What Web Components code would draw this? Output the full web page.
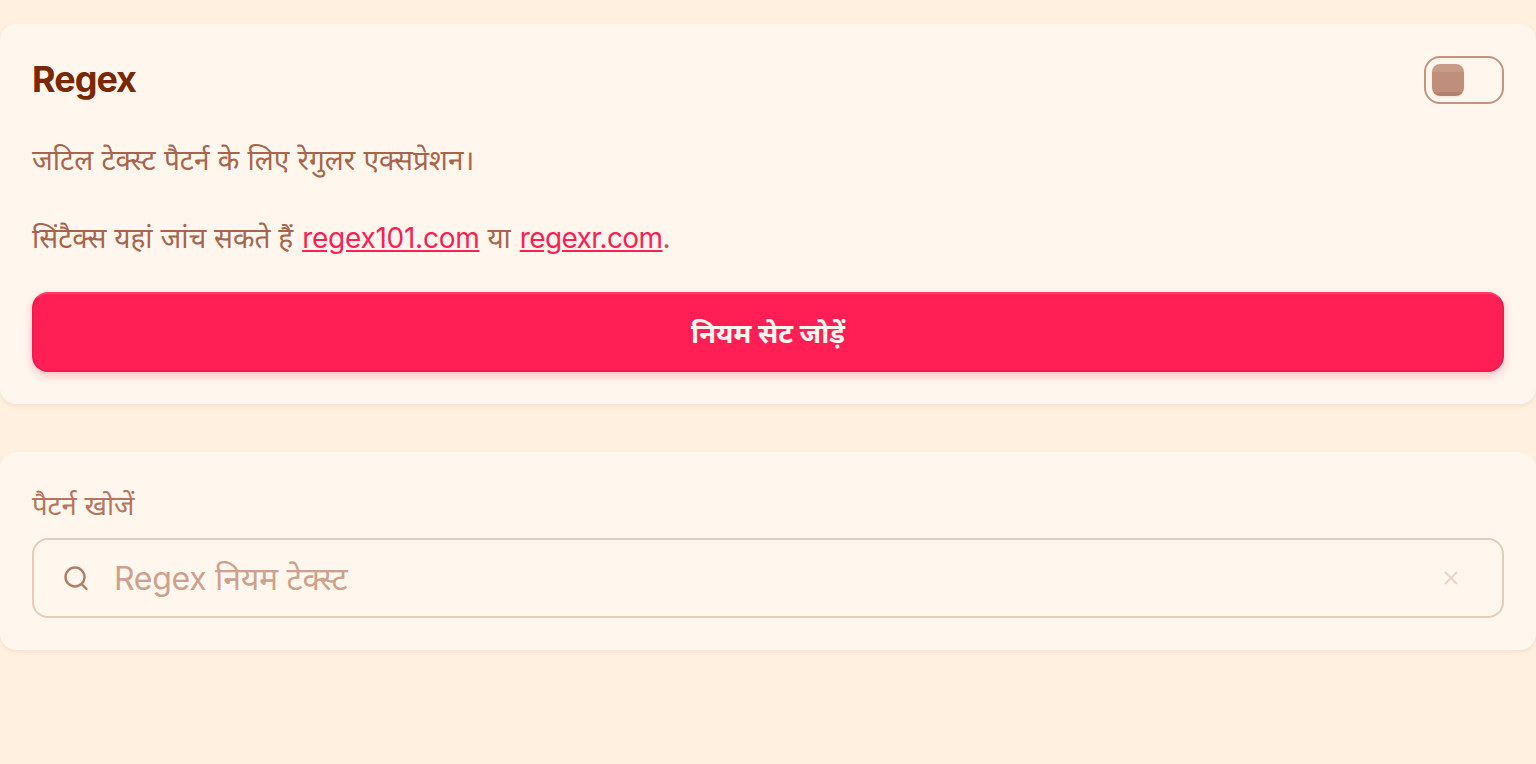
<!DOCTYPE html>
<html lang="hi">
<head>
<meta charset="utf-8">
<title>Regex</title>
<style>
    html, body { margin: 0; height: 100%; }
    body {
        background: #fff0df;
        padding-top: 24px;
        box-sizing: border-box;
        font-family: Inter, "Noto Sans", "Noto Sans Devanagari", sans-serif;
        color: #a8644c;
    }
    settings-card + settings-card { margin-top: 48px; }
    a { color: #ff1f55; letter-spacing: -0.25px; margin-left: 1px; }
    a.short { letter-spacing: -0.6px; }
    .first { word-spacing: 0.4px; }
</style>
</head>
<body>
<settings-card>
    <card-header title="Regex"></card-header>
    <p-text>
        <span class="first">जटिल टेक्स्ट पैटर्न के लिए रेगुलर एक्सप्रेशन।</span><br><br>सिंटैक्स यहां जांच सकते हैं <a href="#">regex101.com</a> या <a href="#" class="short">regexr.com</a>.
    </p-text>
    <primary-button>नियम सेट जोड़ें</primary-button>
</settings-card>
<settings-card>
    <search-field label="पैटर्न खोजें" placeholder="Regex नियम टेक्स्ट"></search-field>
</settings-card>

<script>
class SettingsCard extends HTMLElement {
    constructor() {
        super();
        this.attachShadow({ mode: 'open' });
        this.shadowRoot.innerHTML = `
            <style>
                :host {
                    display: block;
                    box-sizing: border-box;
                    padding: 32px;
                    background: #fff6ed;
                    border-radius: 16px;
                    box-shadow: 0 2px 4px rgba(160, 90, 40, 0.1);
                }
            </style>
            <slot></slot>
        `;
    }
}

class ToggleSwitch extends HTMLElement {
    constructor() {
        super();
        this.attachShadow({ mode: 'open' });
        this.shadowRoot.innerHTML = `
            <style>
                :host {
                    display: block;
                    box-sizing: border-box;
                    width: 80px;
                    height: 48px;
                    padding: 6px;
                    border: 2px solid #c49481;
                    border-radius: 16px;
                }
                #knob {
                    width: 32px;
                    height: 32px;
                    border-radius: 8px;
                    background: linear-gradient(#c79c89 0 8px, #bf8f7b 8px 28px, #b4816c 28px);
                    box-shadow: 0 1px 2px rgba(160, 90, 40, 0.12);
                }
            </style>
            <div id="knob"></div>
        `;
    }
}

class CardHeader extends HTMLElement {
    constructor() {
        super();
        this.attachShadow({ mode: 'open' });
    }

    connectedCallback() {
        this.shadowRoot.innerHTML = `
            <style>
                :host {
                    display: flex;
                    align-items: center;
                    justify-content: space-between;
                    height: 48px;
                }
                h2 {
                    margin: -2px 0 0;
                    font-size: 36px;
                    font-weight: 650;
                    line-height: 48px;
                    letter-spacing: -1px;
                    color: #7a2804;
                }
            </style>
            <h2>${this.getAttribute('title')}</h2>
            <toggle-switch></toggle-switch>
        `;
    }
}

class PText extends HTMLElement {
    constructor() {
        super();
        this.attachShadow({ mode: 'open' });
        this.shadowRoot.innerHTML = `
            <style>
                :host {
                    display: block;
                    margin: 37px 0 34px;
                    font-size: 28px;
                    line-height: 39px;
                    color: #a8644c;
                }
            </style>
            <slot></slot>
        `;
    }
}

class PrimaryButton extends HTMLElement {
    constructor() {
        super();
        this.attachShadow({ mode: 'open' });
        this.shadowRoot.innerHTML = `
            <style>
                :host {
                    display: flex;
                    align-items: center;
                    justify-content: center;
                    box-sizing: border-box;
                    height: 80px;
                    border-radius: 16px;
                    background: #ff1f55;
                    border: 2px solid #f01a4e;
                    border-top-color: #ff3d6c;
                    box-shadow: 0 4px 8px rgba(255, 31, 85, 0.25);
                    color: #fff6ed;
                    font-size: 27.5px;
                    font-weight: 700;
                }
            </style>
            <slot></slot>
        `;
    }
}

class SearchField extends HTMLElement {
    constructor() {
        super();
        this.attachShadow({ mode: 'open' });
    }

    connectedCallback() {
        this.shadowRoot.innerHTML = `
            <style>
                :host { display: block; }
                label {
                    display: block;
                    margin-bottom: 12px;
                    font-size: 27.5px;
                    line-height: 42px;
                    color: #b5755f;
                }
                #box {
                    display: flex;
                    align-items: center;
                    box-sizing: border-box;
                    height: 80px;
                    padding: 0 44px 0 28px;
                    border: 2px solid #e5cbbc;
                    border-radius: 16px;
                    gap: 24px;
                }
                input {
                    flex: 1;
                    min-width: 0;
                    border: 0;
                    outline: none;
                    padding: 0;
                    background: transparent;
                    font: 32px Inter, "Noto Sans", "Noto Sans Devanagari", sans-serif;
                    letter-spacing: -0.3px;
                    color: #7a2804;
                }
                input::placeholder { color: #cda18d; opacity: 1; }
                svg { display: block; flex: none; }
            </style>
            <label for="q">${this.getAttribute('label')}</label>
            <div id="box">
                <svg width="28" height="28" viewBox="0 0 28 28" fill="none" stroke="#b57b64" stroke-width="2.4" stroke-linecap="round">
                    <circle cx="13" cy="13" r="9.5"/>
                    <path d="M20 20.5l4.5 4.5"/>
                </svg>
                <input id="q" placeholder="${this.getAttribute('placeholder')}">
                <svg width="14" height="14" viewBox="0 0 14 14" fill="none" stroke="#ecd3c6" stroke-width="2">
                    <path d="M1 1l12 12M13 1L1 13"/>
                </svg>
            </div>
        `;
    }
}

customElements.define('settings-card', SettingsCard);
customElements.define('toggle-switch', ToggleSwitch);
customElements.define('card-header', CardHeader);
customElements.define('p-text', PText);
customElements.define('primary-button', PrimaryButton);
customElements.define('search-field', SearchField);
</script>
</body>
</html>
